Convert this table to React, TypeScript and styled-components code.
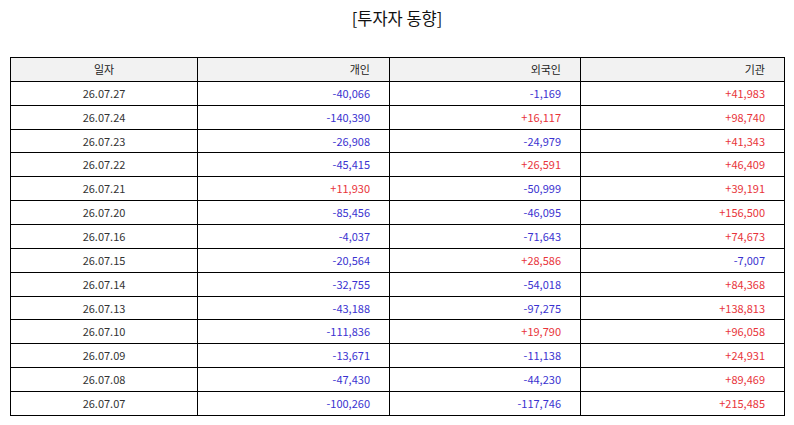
import React from "react";
import styled, { createGlobalStyle } from "styled-components";

const Global = createGlobalStyle`
  html, body { margin: 0; padding: 0; background: #fff; }
  body { font-family: "Noto Sans CJK KR", "Noto Sans", sans-serif; }
`;

const Page = styled.div`
  width: 794px;
  height: 425px;
  box-sizing: border-box;
  padding: 6px 10px 0 10px;
  display: flex;
  flex-direction: column;
  align-items: stretch;
`;

const Title = styled.h1`
  margin: 0;
  height: 51px;
  font-size: 16.5px;
  font-weight: 400;
  color: #111;
  text-align: center;
  line-height: 24px;
`;

const Table = styled.table`
  width: 774px;
  border-collapse: collapse;
  table-layout: fixed;
  font-size: 11px;
  color: #333;
`;

const Cell = styled.td<{ $align?: "center" | "right"; $tone?: "up" | "down" }>`
  border: 1px solid #000;
  height: 22.87px;
  padding: 0 19px 0 4px;
  text-align: ${(p) => p.$align ?? "right"};
  color: ${(p) => (p.$tone === "up" ? "#e8343a" : p.$tone === "down" ? "#3a32d0" : "#333")};
  ${(p) => (p.$align === "center" ? "padding: 0;" : "")}
  line-height: 1;
  white-space: nowrap;
`;

const Head = styled(Cell).attrs({ as: "th" })`
  background: #f2f2f2;
  font-weight: 400;
  color: #222;
`;

const rows: [string, string, string, string][] = [
  ["26.07.27", "-40,066", "-1,169", "+41,983"],
  ["26.07.24", "-140,390", "+16,117", "+98,740"],
  ["26.07.23", "-26,908", "-24,979", "+41,343"],
  ["26.07.22", "-45,415", "+26,591", "+46,409"],
  ["26.07.21", "+11,930", "-50,999", "+39,191"],
  ["26.07.20", "-85,456", "-46,095", "+156,500"],
  ["26.07.16", "-4,037", "-71,643", "+74,673"],
  ["26.07.15", "-20,564", "+28,586", "-7,007"],
  ["26.07.14", "-32,755", "-54,018", "+84,368"],
  ["26.07.13", "-43,188", "-97,275", "+138,813"],
  ["26.07.10", "-111,836", "+19,790", "+96,058"],
  ["26.07.09", "-13,671", "-11,138", "+24,931"],
  ["26.07.08", "-47,430", "-44,230", "+89,469"],
  ["26.07.07", "-100,260", "-117,746", "+215,485"],
];

const tone = (v: string) => (v.startsWith("+") ? "up" : "down");

export default function App() {
  return (
    <>
      <Global />
      <Page>
        <Title>[투자자 동향]</Title>
        <Table>
          <colgroup>
            <col style={{ width: 187 }} />
            <col style={{ width: 192 }} />
            <col style={{ width: 191 }} />
            <col style={{ width: 204 }} />
          </colgroup>
          <thead>
            <tr>
              <Head $align="center">일자</Head>
              <Head>개인</Head>
              <Head>외국인</Head>
              <Head>기관</Head>
            </tr>
          </thead>
          <tbody>
            {rows.map((r) => (
              <tr key={r[0]}>
                <Cell $align="center">{r[0]}</Cell>
                <Cell $tone={tone(r[1])}>{r[1]}</Cell>
                <Cell $tone={tone(r[2])}>{r[2]}</Cell>
                <Cell $tone={tone(r[3])}>{r[3]}</Cell>
              </tr>
            ))}
          </tbody>
        </Table>
      </Page>
    </>
  );
}
